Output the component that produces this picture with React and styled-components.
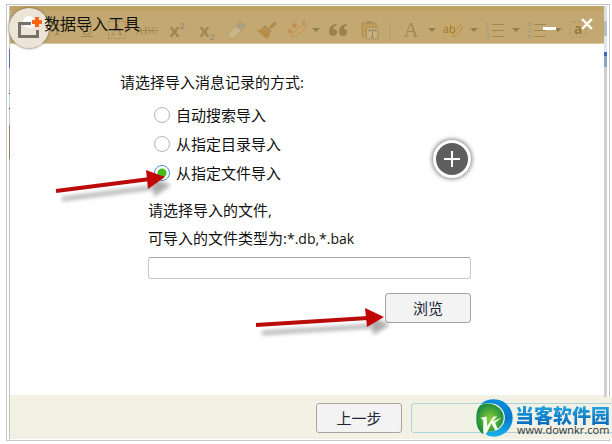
import React, { useState } from "react"
import styled, { createGlobalStyle, css } from "styled-components"

const GlobalStyle = createGlobalStyle`
  * {
    box-sizing: border-box;
  }

  body {
    margin: 0;
    background: #fff;
    color: #111;
    font-family: "Open Sans", "Noto Sans CJK SC", sans-serif;
    font-size: 15px;
  }
`

const Page = styled.div`
  display: flex;
  position: relative;
  min-height: 100vh;
  padding: 4px 2px 3px 6px;
`

const Frame = styled.div`
  display: flex;
  flex: 1;
  padding: 1px 2px 1px 2px;
  border: 1px solid #c6c6c6;
`

const LeftEdge = styled.div`
  width: 1px;
  background: linear-gradient(
    #c9c9c9 43px,
    #5a68b8 43px 62px,
    #c4c4c8 62px 87px,
    #333 87px 88px,
    #b5dcd8 88px 102px,
    #333 102px 103px,
    #c9c9c9 103px 119px,
    #97824f 119px 153px,
    #c2c2c2 153px
  );
`

const RightEdge = styled.div`
  width: 3px;
  background: linear-gradient(
    #dcdfe6 15px,
    #b5bccb 15px 30px,
    #e2e5ea 30px 46px,
    #3b63c4 46px 50px,
    #8ea2c4 50px 61px,
    #d0d0d0 61px
  );
`

const Dialog = styled.section`
  display: flex;
  flex: 1;
  flex-direction: column;
`

const TitleBar = styled.header`
  position: relative;
  height: 38px;
  background: linear-gradient(#bfa365 5px, #c3a971 5px);
  border-bottom: 1px solid #d9c9a3;
`

const Tools = styled.div`
  display: flex;
  align-items: center;
  height: 37px;
  padding: 10px 0 0 32px;
  color: #957d4a;
  opacity: 0.75;
`

const Tool = styled.span`
  display: flex;
  flex: none;
  align-items: center;
  justify-content: center;
  width: ${props => props.$width || 30}px;
  height: 24px;
  font-family: "Liberation Serif", serif;
  font-size: ${props => props.$size || 16}px;
  line-height: 24px;
  text-decoration: ${props => props.$line || "none"};
`

const Boxed = styled.span`
  width: 18px;
  height: 18px;
  border: 1px dotted #957d4a;
  line-height: 16px;
  text-align: center;
`

const Script = styled.b`
  font-family: "Open Sans", sans-serif;
  font-size: 18px;
  line-height: 20px;

  sup,
  sub {
    font-size: 9px;
    line-height: 0;
    color: #8f8a78;
  }

  sup {
    vertical-align: 8px;
  }

  sub {
    vertical-align: -3px;
  }
`

const Caret = styled.span`
  flex: none;
  width: 8px;
  border: 4px solid transparent;
  border-top-color: #85703f;
  border-bottom: 0;
`

const Divider = styled.span`
  flex: none;
  width: 10px;
  height: 22px;
  background: linear-gradient(90deg, transparent 5px, #b59c65 5px 6px, transparent 6px);
`

const AppLogo = styled.div`
  position: absolute;
  top: 2px;
  left: -1px;
  width: 40px;
  height: 40px;
  border-radius: 50%;
  background: #ece5d7;
  box-shadow: 0 0 2px 1px rgba(120, 105, 75, 0.6);
`

const Title = styled.h1`
  position: absolute;
  top: 6px;
  left: 34px;
  margin: 0;
  font-size: 16px;
  font-weight: 400;
  line-height: 24px;
`

const WindowButtons = styled.div`
  position: absolute;
  top: 7px;
  right: 6px;
  display: flex;
  gap: 15px;
`

const WindowButton = styled.button`
  display: flex;
  width: 22px;
  height: 22px;
  padding: 0;
  border: 0;
  background: none;
`

const Content = styled.form`
  position: relative;
  flex: 1;
  padding: 26px 133px 20px 110px;
`

const Prompt = styled.p`
  margin: 0;
  line-height: 24px;
`

const Options = styled.div`
  display: flex;
  flex-direction: column;
  gap: 5px;
  padding: 9px 0 0 34px;
`

const Option = styled.label`
  position: relative;
  display: flex;
  align-items: center;
  gap: 6px;
  line-height: 24px;
`

const Radio = styled.input`
  appearance: none;
  width: 16px;
  height: 16px;
  margin: 0;
  border: 1px solid #b4b4b4;
  border-radius: 50%;
  background: #fff;

  &:checked {
    border-color: #4a8fd0;
    background: radial-gradient(circle, #46bd1c 4px, #fff 5px);
  }
`

const FileSection = styled.div`
  padding: 11px 0 0 28px;
`

const FileLabel = styled.label`
  display: block;
  line-height: 28px;
`

const FileTypes = styled.span`
  font-size: 14px;
`

const FileInput = styled.input`
  display: block;
  width: 100%;
  height: 22px;
  margin-top: 4px;
  padding: 0 4px;
  border: 1px solid #c8c8c8;
  border-top-color: #a8a8a8;
  border-radius: 3px;
  background: #fff;
  font: inherit;
`

const BrowseRow = styled.div`
  position: relative;
  display: flex;
  justify-content: flex-end;
  margin-top: 14px;
`

const Button = styled.button`
  flex: none;
  width: 86px;
  height: 30px;
  padding: 0;
  border: 1px solid #a5a5a2;
  border-radius: 3px;
  background: #f3f3f3;
  color: #1b2535;
  font: inherit;
  line-height: 26px;

  ${props =>
    props.$next &&
    css`
      flex: 1;
      border-color: #abd3dc;
      background: #f2f1e6;
    `}
`

const AddButton = styled.button`
  position: absolute;
  top: 96px;
  right: 133px;
  display: flex;
  width: 38px;
  height: 38px;
  padding: 0;
  border: 3px solid #fff;
  border-radius: 50%;
  background: #5e5e5e;
  box-shadow: 0 0 4px 1px rgba(0, 0, 0, 0.5);
`

const Pointer = styled.svg`
  position: absolute;
  top: ${props => props.$top}px;
  left: ${props => props.$left}px;
  overflow: visible;
  pointer-events: none;
`

const Footer = styled.footer`
  display: flex;
  gap: 9px;
  height: 44px;
  padding: 8px 0 0 306px;
  background: #f3f1e4;
`

const Watermark = styled.a`
  position: absolute;
  right: 0;
  bottom: 5px;
  display: flex;
  gap: 2px;
  width: 136px;
  height: 42px;
  background: linear-gradient(
    #f3f1e4 6px,
    #abd3dc 6px 7px,
    #f2f1e6 7px 35px,
    #abd3dc 35px 36px,
    #f3f1e4 36px
  );
  text-decoration: none;

  svg {
    flex: none;
    margin-top: 2px;
  }
`

const SiteText = styled.span`
  display: flex;
  flex-direction: column;
  padding-top: 7px;
  white-space: nowrap;
`

const SiteName = styled.b`
  background: linear-gradient(#22a9e8, #0767b8);
  background-clip: text;
  color: transparent;
  font-family: "Noto Sans CJK SC", sans-serif;
  font-size: 19px;
  font-weight: 900;
  line-height: 22px;
`

const SiteUrl = styled.span`
  padding-left: 2px;
  color: #333;
  font-size: 11px;
  line-height: 8px;
`

const modes = [
  { id: "auto", label: "自动搜索导入" },
  { id: "folder", label: "从指定目录导入" },
  { id: "file", label: "从指定文件导入" },
]

const ListIcon = ({ dots }) => (
  <svg width="20" height="18" viewBox="0 0 20 18" stroke="#957d4a" fill="none">
    <path d="M7 3.5H19M7 9.5H19M7 15.5H19" strokeWidth="1.2" />
    {dots ? (
      <g stroke="#a39b82" strokeWidth="1.4">
        <circle cx="2.5" cy="3.5" r="1.5" />
        <circle cx="2.5" cy="9.5" r="1.5" />
        <circle cx="2.5" cy="15.5" r="1.5" />
      </g>
    ) : (
      <path d="M1 1.5H3V5M1 5H4M1 7.500H4L1 11H4M1 13H4V17H1M2 15H4" stroke="#a39b82" />
    )}
  </svg>
)

const EditorTools = () => (
  <Tools aria-hidden="true">
    <Tool $size={17}>T</Tool>
    <Tool $size={17} $line="underline">U</Tool>
    <Tool><Boxed>A</Boxed></Tool>
    <Tool $size={11} $line="line-through">ABC</Tool>
    <Tool><Script>x<sup>2</sup></Script></Tool>
    <Tool><Script>x<sub>2</sub></Script></Tool>
    <Tool>
      <svg width="20" height="20" viewBox="0 0 20 20">
        <path d="M1 14L12 2Q13 1 15 2L18 5Q19 6 18 7L7 18Q5 19 3 18L1 16Z" fill="#cdb98c" stroke="#b09a6a" />
        <path d="M8 6L12 2Q13 1 15 2L18 5Q19 6 18 7L14 11Z" fill="#a69d83" />
      </svg>
    </Tool>
    <Tool>
      <svg width="20" height="18" viewBox="0 0 20 18">
        <path d="M12 6L17 1Q20 1 19 4L14 8Z" fill="#a97f42" />
        <path d="M8 4L15 10L13 12L6 6Z" fill="#a18554" />
        <path d="M6 6L13 12Q13 16 10 18Q4 15 0 9Q4 9 6 6Z" fill="#b9893f" />
        <path d="M3 9L10 16M6 8L11 14" stroke="#a2793b" />
      </svg>
    </Tool>
    <Tool>
      <svg width="20" height="18" viewBox="0 0 20 18">
        <path d="M4 16L7 11L17 3L20 6L9 15Z" fill="#d1a764" stroke="#b38b4d" />
        <path d="M7 0L8 3H11L9 5L10 7L7 6L5 7L6 4L4 3H6ZM16 -1L17 1H19L17 3L15 2ZM3 7L4 9H6L4 11L5 13L3 12L1 13L2 11L0 9H2Z" fill="#c38344" />
      </svg>
    </Tool>
    <Caret />
    <Tool $width={36}>
      <svg width="19" height="12" viewBox="0 0 19 12" fill="#8b7544">
        <path d="M7 0Q0 1 0 7Q0 12 4 12Q8 12 8 8Q8 5 4 5Q5 2 8 1ZM18 0Q10 1 10 7Q10 12 14 12Q18 12 18 8Q18 5 15 5Q15 2 18 1Z" />
      </svg>
    </Tool>
    <Tool $width={28}>
      <svg width="18" height="20" viewBox="0 0 18 20">
        <path d="M1 3H15V17H1Z" fill="#bf9850" stroke="#b08543" />
        <path d="M5 1H11V4H5Z" fill="#a18a58" />
        <path d="M5.500 7.500H17V19H5.500Z" fill="#c9b486" stroke="#a18a58" />
        <path d="M8 12V10H15V12M11.500 10V17M10 17H13" stroke="#8d7748" fill="none" />
      </svg>
    </Tool>
    <Divider />
    <Tool $width={34} $size={21}>A</Tool>
    <Caret />
    <Tool $width={34}>
      <svg width="20" height="16" viewBox="0 0 20 16">
        <path d="M0 1H12V13H0Z" fill="#cba95b" />
        <text x="0" y="11" fontFamily="Open Sans, sans-serif" fontSize="11" fill="#7d683a">ab</text>
        <path d="M10 15L11 11L17 3L20 5L14 13Z" fill="#cfa864" stroke="#b18649" />
      </svg>
    </Tool>
    <Caret />
    <Tool $width={34}><ListIcon /></Tool>
    <Caret />
    <Tool $width={34}><ListIcon dots /></Tool>
    <Caret />
    <Tool $width={34}>
      <svg width="20" height="18" viewBox="0 0 20 18">
        <rect x="1" y="1" width="16" height="15" rx="4" fill="none" stroke="#b29b68" strokeWidth="2" strokeDasharray="2 2" />
        <text x="5" y="13" fontFamily="Open Sans, sans-serif" fontWeight="700" fontSize="14" fill="#86672b">a</text>
      </svg>
    </Tool>
  </Tools>
)

const Arrow = ({ top, left, width, height, shaft, head }) => (
  <Pointer $top={top} $left={left} width={width} height={height} aria-hidden="true">
    <g transform="translate(6 8)" opacity="0.32" filter="blur(2px)">
      <path d={shaft} stroke="#000" strokeWidth="4" />
      <path d={head} fill="#000" />
    </g>
    <path d={shaft} stroke="#bb0a0a" strokeWidth="4" />
    <path d={head} fill="#c00606" />
  </Pointer>
)

const SiteLogo = () => (
  <svg width="37" height="38" viewBox="16 30 112 115">
    <defs>
      <linearGradient id="ring" x1="0" y1="0" x2="0" y2="1">
        <stop offset="0" stopColor="#0a8fdd" />
        <stop offset="0.5" stopColor="#0679cc" />
        <stop offset="1" stopColor="#18b4ec" />
      </linearGradient>
      <radialGradient id="leaf">
        <stop offset="0" stopColor="#8fcc3a" />
        <stop offset="0.6" stopColor="#49a83a" />
        <stop offset="1" stopColor="#1b8d3f" />
      </radialGradient>
    </defs>
    <path d="M30 46C48 28 83 25 107 44C132 65 134 102 111 127C96 143 70 149 48 139L43 128C68 133 91 123 100 103C112 74 91 44 60 42C48 41 38 43 30 46Z" fill="url(#ring)" />
    <path d="M29 49C49 36 84 46 96 70C106 91 95 116 72 125C63 129 52 130 42 127L38 137C24 128 16 110 17 90C17 72 20 57 29 49Z" fill="url(#leaf)" />
    <path d="M30 87L48 83L50 112L68 84L80 82L66 98L94 86L74 102L83 124L73 123L63 104L48 134L38 134L38 94Z" fill="#f5fbef" />
  </svg>
)

const App = () => {
  const [mode, setMode] = useState("file")
  const [path, setPath] = useState("")

  return (
    <>
      <GlobalStyle />
      <Page>
        <Frame>
          <LeftEdge />
          <Dialog>
            <TitleBar>
              <EditorTools />
              <AppLogo>
                <svg width="40" height="40" viewBox="0 0 40 40">
                  <circle cx="20" cy="14" r="6" fill="#fff" />
                  <path d="M22 15.500H10.500V28.500H28.500V22" fill="none" stroke="#77736b" strokeWidth="3" />
                  <path d="M28 9V19M23 14H33" stroke="#ff6410" strokeWidth="4" />
                </svg>
              </AppLogo>
              <Title>数据导入工具</Title>
              <WindowButtons>
                <WindowButton type="button" aria-label="最小化">
                  <svg width="22" height="22" stroke="#fff" strokeWidth="3">
                    <path d="M4 15.500H17" />
                  </svg>
                </WindowButton>
                <WindowButton type="button" aria-label="关闭">
                  <svg width="22" height="22" stroke="#fff" strokeWidth="2.4">
                    <path d="M6 6L16 16M16 6L6 16" />
                  </svg>
                </WindowButton>
              </WindowButtons>
            </TitleBar>

            <Content onSubmit={event => event.preventDefault()}>
              <Prompt id="mode-prompt">请选择导入消息记录的方式:</Prompt>
              <Options role="radiogroup" aria-labelledby="mode-prompt">
                {modes.map(item => (
                  <Option key={item.id}>
                    <Radio
                      type="radio"
                      name="mode"
                      checked={mode === item.id}
                      onChange={() => setMode(item.id)}
                    />
                    {item.label}
                    {item.id === "file" && (
                      <Arrow
                        top={8}
                        left={-98}
                        width={112}
                        height={24}
                        shaft="M0 22L94 10"
                        head="M90 1L109 8L92 20Z"
                      />
                    )}
                  </Option>
                ))}
              </Options>

              <FileSection>
                <FileLabel htmlFor="file-path">
                  请选择导入的文件,
                  <br />
                  可导入的文件类型为:<FileTypes>*.db,*.bak</FileTypes>
                </FileLabel>
                <FileInput
                  id="file-path"
                  type="text"
                  value={path}
                  onChange={event => setPath(event.target.value)}
                />
                <BrowseRow>
                  <Button type="button">浏览</Button>
                  <Arrow
                    top={14}
                    left={108}
                    width={130}
                    height={24}
                    shaft="M0 18L112 11"
                    head="M109 1L128 10L111 20Z"
                  />
                </BrowseRow>
              </FileSection>

              <AddButton type="button" aria-label="添加">
                <svg width="32" height="32" stroke="#fff" strokeWidth="2">
                  <path d="M16 8V24M8 16H24" />
                </svg>
              </AddButton>
            </Content>

            <Footer>
              <Button type="button">上一步</Button>
              <Button type="button" $next aria-label="下一步" />
            </Footer>
          </Dialog>
          <RightEdge />
        </Frame>

        <Watermark href="#">
          <SiteLogo />
          <SiteText>
            <SiteName>当客软件园</SiteName>
            <SiteUrl>www.downkr.com</SiteUrl>
          </SiteText>
        </Watermark>
      </Page>
    </>
  )
}

export default App
